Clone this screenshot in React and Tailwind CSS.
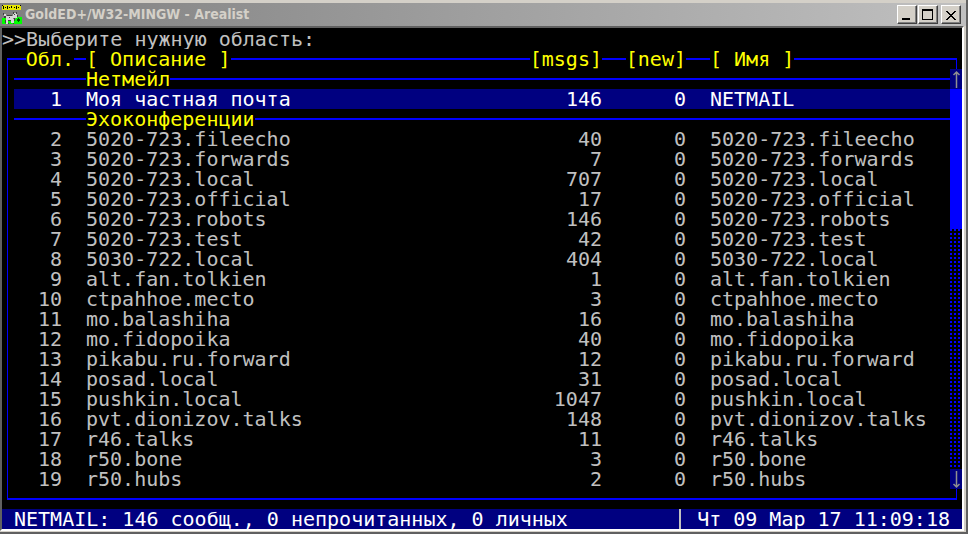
const echoes = [
  ['5020-723.fileecho', 40],
  ['5020-723.forwards', 7],
  ['5020-723.local', 707],
  ['5020-723.official', 17],
  ['5020-723.robots', 146],
  ['5020-723.test', 42],
  ['5030-722.local', 404],
  ['alt.fan.tolkien', 1],
  ['ctpahhoe.mecto', 3],
  ['mo.balashiha', 16],
  ['mo.fidopoika', 40],
  ['pikabu.ru.forward', 12],
  ['posad.local', 31],
  ['pushkin.local', 1047],
  ['pvt.dionizov.talks', 148],
  ['r46.talks', 11],
  ['r50.bone', 3],
  ['r50.hubs', 2],
];

function GoldedLogo() {
  return (
    <svg className="h-5 w-5 shrink-0" viewBox="0 0 20 20" shapeRendering="crispEdges" aria-hidden="true">
      <path fill="#00ff00" d="M0 12h20v7H0z" />
      <path fill="#808080" d="M0 12h2v1H0zM8 12h6v2H8z" />
      <path fill="#e6e600" d="M1 0h17v1h1v4H0V1h1z" />
      <path
        fill="#000"
        d="M1 1h1v3H1zM3 2h1v1H3zM5 1h1v3H5zM7 2h1v1H7zM9 1h1v2H9zM12 2h1v1h-1zM14 1h1v3h-1zM16 2h1v1h-1zM0 0h1v1H0zM18 0h1v1h-1z"
      />
      <path fill="#d8d8d8" d="M4 11h7v4H4zM11 8h4v5h-4zM4 15h2v4H4zM9 14h3v4H9zM2 9h2v2H2z" />
      <path fill="#404040" d="M1 8h1v2H1zM2 11h2v2H2zM5 10h5v1H5zM14 7h1v2h-1zM11 7h1v2h-1zM15 10h1v2h-1zM12 9h1v1h-1zM3 15h1v3H3zM6 15h3v1H6zM12 13h1v3h-1zM6 18h1v1H6zM11 18h1v1h-1zM7 12h1v1H7z" />
      <path fill="#005000" d="M16 13h1v4h-1zM15 14h3v2h-3z" />
    </svg>
  );
}

function CaptionButton({ label, children }) {
  return (
    <button
      type="button"
      aria-label={label}
      className="flex h-[19px] w-5 items-center justify-center border border-t-white border-l-white border-r-[#404040] border-b-[#404040] bg-[#d4d0c8] shadow-[inset_-1px_-1px_0_#808080]"
    >
      <svg className="h-3 w-3" viewBox="0 0 12 12" shapeRendering="crispEdges" aria-hidden="true">
        {children}
      </svg>
    </button>
  );
}

function TitleBar() {
  return (
    <header className="flex h-[23px] items-center bg-linear-to-r from-[#808080] to-[#c0c0c0] pr-[5px] pl-0.5">
      <GoldedLogo />
      <h1 className="grow pl-[3px] font-['DejaVu_Sans_Condensed','DejaVu_Sans',sans-serif] text-[14px] font-bold text-[#d4d0c8]">
        GoldED+/W32-MINGW - Arealist
      </h1>
      <div className="flex gap-px">
        <CaptionButton label="Minimize">
          <path d="M1 9h8v2H1z" />
        </CaptionButton>
        <CaptionButton label="Maximize">
          <path fillRule="evenodd" d="M0 0h11v11H0zM1 2v8h9V2z" />
        </CaptionButton>
      </div>
      <div className="pl-[3px]">
        <CaptionButton label="Close">
          <path d="M1 2h2v1h1v1h1v1h2V4h1V3h1V2h2v1h-1v1H9v1H8v1H7v1h1v1h1v1h1v1h1v1H9v-1H8V9H7V8H5v1H4v1H3v1H1v-1h1V9h1V8h1V7h1V6H4V5H3V4H2V3H1z" />
        </CaptionButton>
      </div>
    </header>
  );
}

function Heading({ children }) {
  return <span className="inline-block bg-black">{children}</span>;
}

function SectionRow({ title }) {
  return (
    <tr>
      <th colSpan={5} className="p-0 font-normal text-[#ffff00]">
        <div className="flex items-center">
          <span className="h-0.5 w-18 bg-[#0000ff]" />
          {title}
          <span className="h-0.5 grow bg-[#0000ff]" />
        </div>
      </th>
    </tr>
  );
}

function AreaRow({ index, title, msgs, name, selected }) {
  return (
    <tr className={selected ? 'bg-[#000080] text-white' : ''}>
      <td className="p-0 pr-3 text-right">{index}</td>
      <td className="p-0 pl-3">{title}</td>
      <td className="p-0 text-right">{msgs}</td>
      <td className="p-0 text-right">0</td>
      <td className="p-0 pl-6">{name}</td>
    </tr>
  );
}

function ScrollBar() {
  return (
    <div className="flex w-3 shrink-0 flex-col pt-5" aria-hidden="true">
      <div className="h-5 bg-[#000080]">
        <svg className="h-5 w-3" viewBox="0 0 12 20" fill="none" stroke="#909090" strokeWidth="1.5">
          <path d="M6.5 19V3M3.5 6l3-3 3 3" />
        </svg>
      </div>
      <div className="h-35 bg-[#0000ff]" />
      <div className="grow bg-black bg-[conic-gradient(from_270deg,#0000ff_25%,#000_0)] bg-[size:4px_4px]" />
      <div className="h-5 bg-[#000080]">
        <svg className="h-5 w-3" viewBox="0 0 12 20" fill="none" stroke="#909090" strokeWidth="1.5">
          <path d="M6.5 2v16M3.5 15l3 3 3-3" />
        </svg>
      </div>
    </div>
  );
}

export default function App() {
  return (
    <div className="border-r-2 border-b-2 border-[#606060] bg-[#d4d0c8] pt-[3px] pb-px">
      <TitleBar />
      <div className="pr-0.5">
        <main className="border-2 border-t-[#606060] border-r-white border-b-white border-l-[#606060] bg-black pt-px font-['DejaVu_Sans_Mono',monospace] text-[20px] leading-5 whitespace-pre text-[#c0c0c0]">
          <p>&gt;&gt;Выберите нужную область:</p>
          <div className="relative pb-5">
            <div className="absolute top-[9px] right-[5px] bottom-[9px] left-[5px] border-x border-y-2 border-[#0000ff]" />
            <div className="relative flex pl-3">
              <table className="grow table-fixed border-collapse text-left">
                <colgroup>
                  <col className="w-15" />
                  <col />
                  <col className="w-21" />
                  <col className="w-21" />
                  <col className="w-66" />
                </colgroup>
                <thead>
                  <tr className="text-[#ffff00]">
                    <th className="p-0 text-right font-normal"><Heading>Обл.</Heading></th>
                    <th className="p-0 pl-3 font-normal"><Heading>[ Описание ]</Heading></th>
                    <th className="p-0 text-right font-normal"><Heading>[msgs]</Heading></th>
                    <th className="p-0 text-right font-normal"><Heading>[new]</Heading></th>
                    <th className="p-0 pl-6 font-normal"><Heading>[ Имя ]</Heading></th>
                  </tr>
                </thead>
                <tbody>
                  <SectionRow title="Нетмейл" />
                  <AreaRow index={1} title="Моя частная почта" msgs={146} name="NETMAIL" selected />
                  <SectionRow title="Эхоконференции" />
                  {echoes.map(([name, msgs], i) => (
                    <AreaRow key={name} index={i + 2} title={name} msgs={msgs} name={name} />
                  ))}
                </tbody>
              </table>
              <ScrollBar />
            </div>
          </div>
          <footer className="flex bg-[#000080] text-white">
            <span className="grow pl-3">NETMAIL: 146 сообщ., 0 непрочитанных, 0 личных</span>
            <time className="border-l-2 border-[#c0c0c0] pr-3 pl-4">Чт 09 Мар 17 11:09:18</time>
          </footer>
        </main>
      </div>
    </div>
  );
}
